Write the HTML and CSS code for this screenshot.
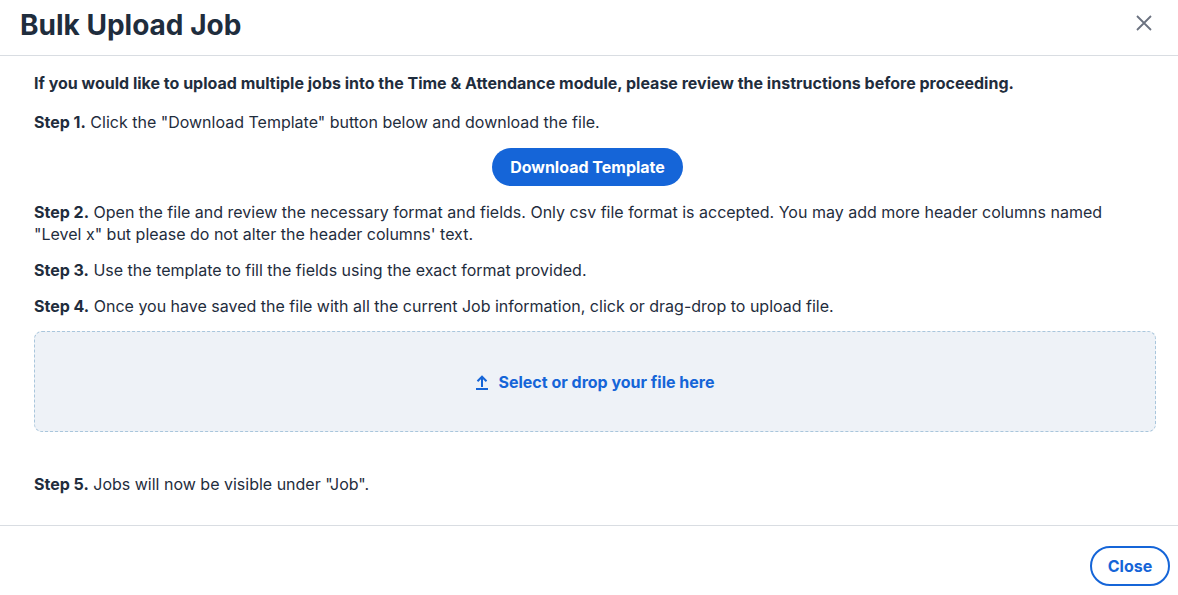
FILE: index.html
```html
<!DOCTYPE html>
<html lang="en">
<head>
<meta charset="utf-8">
<title>Bulk Upload Job</title>
<link rel="stylesheet" href="styles.css">
</head>
<body>
<div class="modal">
  <header class="modal-header">
    <h1 class="modal-title">Bulk Upload Job</h1>
    <button class="icon-close" aria-label="Close">
      <svg width="16" height="16" viewBox="0 0 16 16"><path d="M1 1 L15 15 M15 1 L1 15" stroke="#6b7280" stroke-width="1.8" fill="none"/></svg>
    </button>
  </header>
  <main class="modal-body">
    <p class="intro">If you would like to upload multiple jobs into the Time &amp; Attendance module, please review the instructions before proceeding.</p>
    <p class="step"><b>Step 1.</b> Click the "Download Template" button below and download the file.</p>
    <div class="btn-row"><button class="btn-primary">Download Template</button></div>
    <p class="step"><b>Step 2.</b> Open the file and review the necessary format and fields. Only csv file format is accepted. You may add more header columns named "Level x" but please do not alter the header columns' text.</p>
    <p class="step"><b>Step 3.</b> Use the template to fill the fields using the exact format provided.</p>
    <p class="step"><b>Step 4.</b> Once you have saved the file with all the current Job information, click or drag-drop to upload file.</p>
    <div class="dropzone">
      <span class="drop-label">
        <svg width="14" height="16" viewBox="0 0 14 16"><path d="M7 13 V3 M2.5 7.2 L7 2.7 L11.5 7.2" stroke="#1565d8" stroke-width="2" fill="none"/><path d="M1 15 H13" stroke="#1565d8" stroke-width="2"/></svg>
        Select or drop your file here
      </span>
    </div>
    <p class="step last"><b>Step 5.</b> Jobs will now be visible under "Job".</p>
  </main>
  <footer class="modal-footer">
    <button class="btn-outline">Close</button>
  </footer>
</div>
</body>
</html>
```
FILE: styles.css
```css
* { box-sizing: border-box; }
html, body { margin: 0; padding: 0; background: #fff; }
body {
  font-family: Inter, "Noto Sans", sans-serif;
  color: #1f2d3d;
  width: 1178px;
  height: 595px;
  overflow: hidden;
}
.modal { display: flex; flex-direction: column; height: 595px; }
.modal-header {
  height: 56px;
  border-bottom: 1px solid #d9dde2;
  display: flex;
  align-items: center;
  justify-content: space-between;
  padding: 0 26px 5px 20px;
}
.modal-title {
  margin: 0;
  font-size: 28px;
  font-weight: 700;
  color: #1f2d3d;
}
.icon-close {
  border: 0;
  background: transparent;
  padding: 0;
  width: 16px;
  height: 16px;
  margin-top: -5px;
  display: flex;
}
.modal-body {
  padding: 16px 22px 30px 34px;
  display: flex;
  flex-direction: column;
  border-bottom: 1px solid #d9dde2;
}
.modal-body p { margin: 0; font-size: 16px; line-height: 22px; padding-right: 15px; }
.intro { font-weight: 700; margin-bottom: 17px !important; }
.step b { font-weight: 700; }
.step { margin-bottom: 14px !important; }
.step.last { margin-bottom: 0 !important; }
.btn-row { display: flex; justify-content: center; margin: 1px 15px 15px 0; }
.btn-primary {
  font-family: inherit;
  background: #1565d8;
  color: #fff;
  border: 0;
  border-radius: 19px;
  height: 38px;
  width: 191px;
  font-size: 16px;
  font-weight: 700;
}
.dropzone {
  height: 101px;
  margin: 0 0 41px;
  background: #eef2f7;
  border: 1px dashed #a9c6dc;
  border-radius: 8px;
  display: flex;
  align-items: center;
  justify-content: center;
}
.drop-label {
  display: flex;
  align-items: center;
  gap: 9px;
  color: #1565d8;
  font-size: 16px;
  font-weight: 700;
}
.modal-footer {
  display: flex;
  justify-content: flex-end;
  padding: 20px 8px 0 0;
}
.btn-outline {
  font-family: inherit;
  background: #fff;
  color: #1565d8;
  border: 2px solid #1565d8;
  border-radius: 20px;
  width: 80px;
  height: 40px;
  font-size: 16px;
  font-weight: 700;
}
```
